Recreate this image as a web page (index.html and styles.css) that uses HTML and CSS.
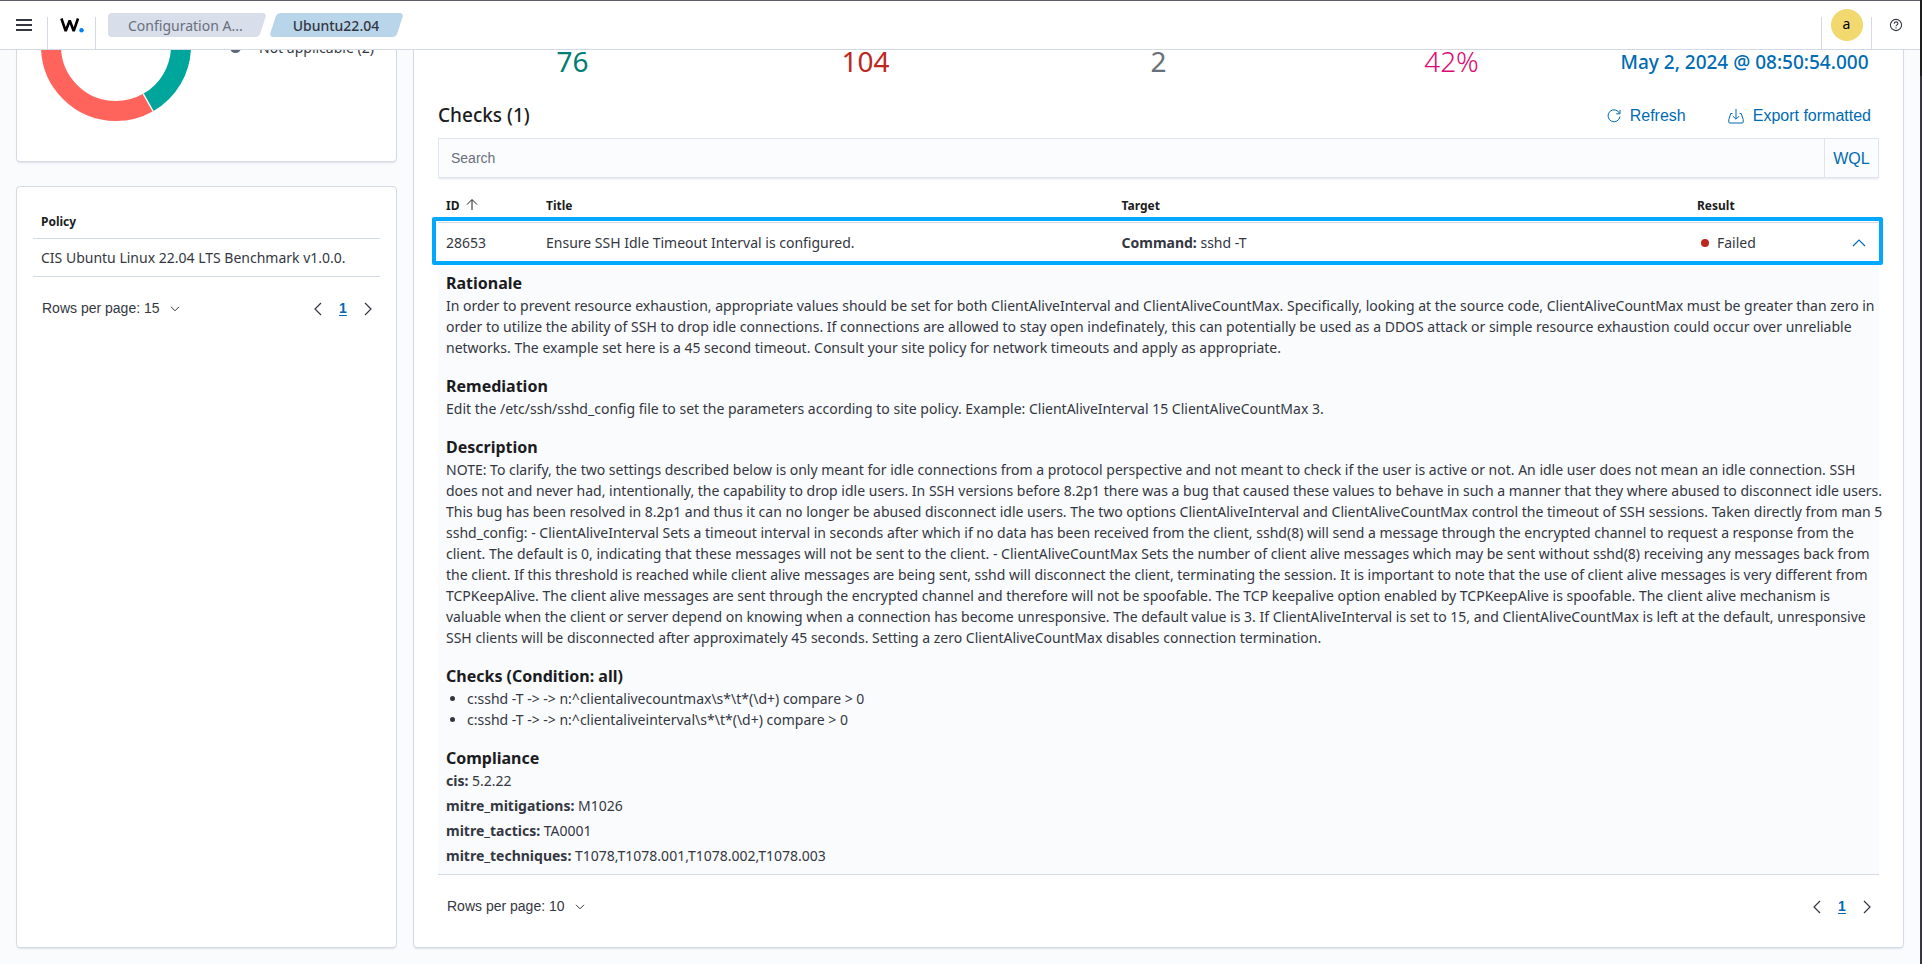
FILE: index.html
```html
<!DOCTYPE html>
<html lang="en">
<head>
<meta charset="utf-8">
<title>Configuration Assessment - Ubuntu22.04</title>
<link rel="stylesheet" href="styles.css">
</head>
<body>
<div class="app">
  <header class="header">
    <button class="header-item menu-button" aria-label="Toggle navigation">
      <svg width="16" height="12" viewBox="0 0 16 12"><path d="M0 1h16M0 6h16M0 11h16" stroke="#343741" stroke-width="2"/></svg>
    </button>
    <a class="header-item brand" href="#" aria-label="Home">
      <svg width="24" height="15" viewBox="0 0 24 15"><path d="M1.400 .5l4.300 12.500 4-10.500 4 10.500L18 .5" fill="none" stroke="#000" stroke-width="2.600" stroke-linejoin="bevel"/><circle cx="21.500" cy="12.300" r="2.200" fill="#0080ff"/></svg>
    </a>
    <nav class="breadcrumbs" aria-label="Breadcrumbs">
      <a class="crumb crumb-first" href="#">Configuration A...</a>
      <a class="crumb crumb-current" href="#" aria-current="page">Ubuntu22.04</a>
    </nav>
    <button class="header-item account" aria-label="Account menu"><span class="avatar">a</span></button>
    <button class="header-item help" aria-label="Help">
      <svg width="14" height="14" viewBox="0 0 14 14" fill="none" stroke="#343741"><circle cx="7" cy="7" r="5.600" stroke-width="1.100"/><path d="M5.200 5.700c0-2.400 3.700-2.400 3.700-.2 0 1.400-1.900 1.300-1.900 2.800M7 9.300v1.200" stroke-width="1.100"/></svg>
    </button>
  </header>

  <main class="viewport">
    <div class="content">
      <aside class="side">
        <section class="panel chart-panel">
          <svg class="donut" width="150" height="150" viewBox="0 0 150 150">
            <g fill="none" stroke-width="20" transform="rotate(-90 75 75)">
              <circle cx="75" cy="75" r="65" stroke="#00a69b" pathLength="182" stroke-dasharray="76 106"/>
              <circle cx="75" cy="75" r="65" stroke="#ff645c" pathLength="182" stroke-dasharray="104 78" stroke-dashoffset="-76"/>
              <circle cx="75" cy="75" r="65" stroke="#5c6773" pathLength="182" stroke-dasharray="2 180" stroke-dashoffset="-180"/>
            </g>
            <path d="M102.300 122.900L112.100 140.200" stroke="#fff" stroke-width="1.300"/>
          </svg>
          <ul class="legend"><li>Not applicable (2)</li></ul>
        </section>
        <section class="panel policy-panel">
          <table class="table">
            <thead><tr><th scope="col">Policy</th></tr></thead>
            <tbody><tr class="policy-row"><td>CIS Ubuntu Linux 22.04 LTS Benchmark v1.0.0.</td></tr></tbody>
          </table>
          <div class="pagination">
            <button class="rows-button">Rows per page: 15
              <svg width="10" height="6" viewBox="0 0 10 6"><path d="M1 .8l4 4 4-4" fill="none" stroke="#343741"/></svg>
            </button>
            <nav class="pages" aria-label="Policy pages">
              <button aria-label="Previous page"><svg width="8" height="14" viewBox="0 0 8 14"><path d="M7 1L1 7l6 6" fill="none" stroke="#343741" stroke-width="1.200"/></svg></button>
              <button class="page-current" aria-current="page">1</button>
              <button aria-label="Next page"><svg width="8" height="14" viewBox="0 0 8 14"><path d="M1 1l6 6-6 6" fill="none" stroke="#343741" stroke-width="1.200"/></svg></button>
            </nav>
          </div>
        </section>
      </aside>

      <section class="panel checks-panel">
        <div class="stats">
          <p class="stat passed">76</p>
          <p class="stat failed">104</p>
          <p class="stat skipped">2</p>
          <p class="stat score">42%</p>
          <p class="stat scan-date">May 2, 2024 @ 08:50:54.000</p>
        </div>
        <div class="toolbar">
          <h1 class="title">Checks (1)</h1>
          <button class="link-button">
            <svg width="14" height="14" viewBox="0 0 14 14" fill="none" stroke="#006bb4"><path d="M12.500 4.300A6 6 0 1 0 13 7.500M13 .8v4H9.200"/></svg>
            Refresh
          </button>
          <button class="link-button">
            <svg width="16" height="16" viewBox="0 0 16 16" fill="none" stroke="#006bb4"><path d="M4.500 5.500H2.800L.8 11.500V14q0 1 1 1h12.400q1 0 1-1v-2.500l-2-6h-1.700M8 1v10M4.800 8L8 11.200 11.200 8"/></svg>
            Export formatted
          </button>
        </div>
        <div class="search">
          <input class="search-input" type="text" placeholder="Search" aria-label="Search">
          <button class="wql">WQL</button>
        </div>
        <table class="table checks">
          <colgroup><col class="col-id"><col><col><col class="col-result"><col class="col-toggle"></colgroup>
          <thead>
            <tr>
              <th scope="col">ID <svg class="sort" width="12" height="11" viewBox="0 0 12 11"><path d="M6 11V1M1 5.500l5-5 5 5" fill="none" stroke="#1a1c21"/></svg></th>
              <th scope="col">Title</th><th scope="col">Target</th><th scope="col">Result</th><td></td>
            </tr>
          </thead>
          <tbody>
            <tr class="check-row">
              <td>28653</td>
              <td>Ensure SSH Idle Timeout Interval is configured.</td>
              <td><strong>Command:</strong> sshd -T</td>
              <td><span class="health">Failed</span></td>
              <td class="toggle-cell"><button class="toggle" aria-label="Collapse" aria-expanded="true"><svg width="14" height="8" viewBox="0 0 14 8"><path d="M1 7l6-6 6 6" fill="none" stroke="#006bb4" stroke-width="1.200"/></svg></button></td>
            </tr>
            <tr>
              <td class="details" colspan="5">
                <section>
                  <h2>Rationale</h2>
                  <p>In order to prevent resource exhaustion, appropriate values should be set for both ClientAliveInterval and ClientAliveCountMax. Specifically, looking at the source code, ClientAliveCountMax must be greater than zero in order to utilize the ability of SSH to drop idle connections. If connections are allowed to stay open indefinately, this can potentially be used as a DDOS attack or simple resource exhaustion could occur over unreliable networks. The example set here is a 45 second timeout. Consult your site policy for network timeouts and apply as appropriate.</p>
                </section>
                <section>
                  <h2>Remediation</h2>
                  <p>Edit the /etc/ssh/sshd_config file to set the parameters according to site policy. Example: ClientAliveInterval 15 ClientAliveCountMax 3.</p>
                </section>
                <section>
                  <h2>Description</h2>
                  <p>NOTE: To clarify, the two settings described below is only meant for idle connections from a protocol perspective and not meant to check if the user is active or not. An idle user does not mean an idle connection. SSH does not and never had, intentionally, the capability to drop idle users. In SSH versions before 8.2p1 there was a bug that caused these values to behave in such a manner that they where abused to disconnect idle users. This bug has been resolved in 8.2p1 and thus it can no longer be abused disconnect idle users. The two options ClientAliveInterval and ClientAliveCountMax control the timeout of SSH sessions. Taken directly from man 5 sshd_config: - ClientAliveInterval Sets a timeout interval in seconds after which if no data has been received from the client, sshd(8) will send a message through the encrypted channel to request a response from the client. The default is 0, indicating that these messages will not be sent to the client. - ClientAliveCountMax Sets the number of client alive messages which may be sent without sshd(8) receiving any messages back from the client. If this threshold is reached while client alive messages are being sent, sshd will disconnect the client, terminating the session. It is important to note that the use of client alive messages is very different from TCPKeepAlive. The client alive messages are sent through the encrypted channel and therefore will not be spoofable. The TCP keepalive option enabled by TCPKeepAlive is spoofable. The client alive mechanism is valuable when the client or server depend on knowing when a connection has become unresponsive. The default value is 3. If ClientAliveInterval is set to 15, and ClientAliveCountMax is left at the default, unresponsive SSH clients will be disconnected after approximately 45 seconds. Setting a zero ClientAliveCountMax disables connection termination.</p>
                </section>
                <section>
                  <h2>Checks (Condition: all)</h2>
                  <ul class="rules">
                    <li>c:sshd -T -&gt; -&gt; n:^clientalivecountmax\s*\t*(\d+) compare &gt; 0</li>
                    <li>c:sshd -T -&gt; -&gt; n:^clientaliveinterval\s*\t*(\d+) compare &gt; 0</li>
                  </ul>
                </section>
                <section>
                  <h2>Compliance</h2>
                  <div class="compliance">
                    <p><strong>cis:</strong> 5.2.22</p>
                    <p><strong>mitre_mitigations:</strong> M1026</p>
                    <p><strong>mitre_tactics:</strong> TA0001</p>
                    <p><strong>mitre_techniques:</strong> T1078,T1078.001,T1078.002,T1078.003</p>
                  </div>
                </section>
              </td>
            </tr>
          </tbody>
        </table>
        <div class="pagination">
          <button class="rows-button">Rows per page: 10
            <svg width="10" height="6" viewBox="0 0 10 6"><path d="M1 .8l4 4 4-4" fill="none" stroke="#343741"/></svg>
          </button>
          <nav class="pages" aria-label="Check pages">
            <button aria-label="Previous page"><svg width="8" height="14" viewBox="0 0 8 14"><path d="M7 1L1 7l6 6" fill="none" stroke="#343741" stroke-width="1.200"/></svg></button>
            <button class="page-current" aria-current="page">1</button>
            <button aria-label="Next page"><svg width="8" height="14" viewBox="0 0 8 14"><path d="M1 1l6 6-6 6" fill="none" stroke="#343741" stroke-width="1.200"/></svg></button>
          </nav>
        </div>
      </section>
    </div>
  </main>
</div>
<div class="window-edge"></div>
</body>
</html>
```

FILE: styles.css
```css
* { box-sizing: border-box; }

body {
  margin: 0;
  height: 100vh;
  display: flex;
  overflow: hidden;
  background: #fafbfd;
  color: #343741;
  font: 14px/21px "Noto Sans", sans-serif;
}

h1, h2, p, ul { margin: 0; padding: 0; }
ul { list-style: none; }
strong { font-weight: 700; }
svg { display: block; flex: none; }

button {
  display: flex;
  align-items: center;
  justify-content: center;
  margin: 0;
  padding: 0;
  border: 0;
  background: none;
  color: inherit;
  font: 14px/21px "Liberation Sans", Arial, sans-serif;
  cursor: pointer;
}

.app {
  flex: 1;
  min-width: 0;
  display: flex;
  flex-direction: column;
  border-top: 1px solid #5f6067;
}

.window-edge {
  width: 2px;
  background: linear-gradient(#1d1e22 76px, #343741 76px);
}

/* Header */

.header {
  flex: none;
  display: flex;
  align-items: flex-end;
  height: 49px;
  border-bottom: 1px solid #d3dae6;
  background: #fff;
}

.header-item {
  display: flex;
  align-items: center;
  justify-content: center;
  width: 48px;
  height: 32px;
  padding-bottom: 16px;
  border-right: 1px solid #d3dae6;
}

.header .help { border-right: 0; }
.header .account { width: 51px; border-left: 1px solid #d3dae6; }

.avatar {
  flex: none;
  width: 32px;
  height: 32px;
  border-radius: 50%;
  background: #f1d86f;
  color: #000;
  font: 400 14px/30px "Noto Sans", sans-serif;
  text-align: center;
}

.breadcrumbs {
  flex: 1;
  display: flex;
  gap: 10px;
  padding: 0 12px 12px;
}

.crumb {
  position: relative;
  isolation: isolate;
  padding: 2px 20px 1px;
  color: #69707d;
  text-decoration: none;
}

.crumb::before,
.crumb-first::after {
  content: "";
  position: absolute;
  z-index: -1;
  inset: 0;
  border-radius: 4px;
  background: #d8deea;
  transform: skewX(-18deg);
}

.crumb-first::before { right: 50%; transform: none; }
.crumb-first::after { left: 4px; }

.crumb-current { color: #343741; font-weight: 500; }
.crumb-current::before { background: #b8d5ea; }

/* Page */

.viewport { flex: 1; min-height: 0; overflow: hidden; }

.content {
  display: grid;
  grid-template-columns: minmax(0, 381fr) minmax(0, 1491fr);
  gap: 16px;
  height: calc(100% + 96px);
  margin-top: -112px;
  padding: 0 16px;
}

.side {
  display: flex;
  flex-direction: column;
  gap: 24px;
}

.panel {
  border: 1px solid #d3dae6;
  border-radius: 4px;
  background: #fff;
  box-shadow: 0 2px 2px -1px rgba(152, 162, 179, 0.3);
}

.chart-panel {
  display: flex;
  align-items: flex-end;
  gap: 39px;
  padding: 32px 24px 40px;
}

.legend { flex: 1; padding-bottom: 63px; }
.legend li { display: flex; align-items: center; gap: 18px; white-space: nowrap; }
.legend li::before {
  content: "";
  width: 11px;
  height: 11px;
  border-radius: 50%;
  background: #5c6773;
}

.policy-panel { flex: 1; padding: 16px; }
.checks-panel { padding: 101px 24px 0; }

/* Tables */

.table { width: 100%; border-collapse: collapse; table-layout: fixed; }
.table th, .table td { padding: 0 8px; text-align: left; }
.table thead th { height: 35px; padding-top: 4px; color: #1a1c21; font-size: 12px; line-height: 18px; font-weight: 700; }
.table tbody td { border-top: 1px solid #d3dae6; border-bottom: 1px solid #d3dae6; }
.policy-row td { height: 38px; }

.pagination {
  display: flex;
  align-items: center;
  justify-content: space-between;
  padding-top: 20px;
}

.rows-button { gap: 10px; padding-left: 9px; }
.pages { display: flex; gap: 1px; }
.pages button { width: 24px; height: 24px; }
.pages .page-current {
  color: #006bb4;
  font-weight: 700;
  text-decoration: underline;
  text-underline-offset: 2px;
}

/* Checks */

.stats { display: grid; grid-template-columns: repeat(5, 1fr); align-items: center; margin: 0 -12px; }
.stat { font-size: 28px; line-height: 40px; font-weight: 400; text-align: center; white-space: nowrap; }
.passed { color: #017d73; }
.failed { color: #bd271e; }
.skipped { color: #69707d; }
.score { color: #dd0a73; font-weight: 300; }
.scan-date { padding-top: 2px; color: #006bb4; font-size: 19px; font-weight: 500; }

.toolbar { display: flex; align-items: center; gap: 42px; height: 40px; margin: 13px 8px 3px 0; }
.title { flex: 1; color: #1a1c21; font-size: 19px; line-height: 32px; font-weight: 500; }
.link-button { gap: 9px; padding-top: 2px; color: #006bb4; font-size: 16px; line-height: 24px; }

.search {
  display: flex;
  height: 40px;
  border: 1px solid #e0e4ee;
  background: #fbfcfd;
  box-shadow: 0 2px 2px -1px rgba(152, 162, 179, 0.3);
}

.search-input {
  flex: 1;
  min-width: 0;
  padding: 0 12px;
  border: 0;
  background: none;
  color: #343741;
  font: 14px/21px "Liberation Sans", Arial, sans-serif;
}

.search-input::placeholder { color: #69707d; opacity: 1; }
.wql { width: 54px; border-left: 1px solid #e0e4ee; color: #006bb4; font-size: 16px; }

.checks { margin-top: 9px; }
.col-id { width: 100px; }
.col-result { width: 142px; }
.col-toggle { width: 48px; }
.sort { display: inline-block; margin-left: 3px; }

.check-row { position: relative; }
.check-row td { height: 41px; }
.toggle-cell::after {
  content: "";
  position: absolute;
  inset: -5px -4px -2px -6px;
  border: 4px solid #00a9ff;
  border-radius: 2px;
  pointer-events: none;
}

.health { display: flex; align-items: center; gap: 8px; padding-left: 4px; }
.health::before { content: ""; width: 8px; height: 8px; border-radius: 50%; background: #bd271e; }
.toggle { width: 24px; height: 24px; margin-left: auto; }

.table td.details { padding: 7px 0 8px 8px; background: #fafbfd; }
.details section { margin-right: -5px; }
.details section + section { margin-top: 16px; }
.details h2 { color: #1a1c21; font-size: 16px; line-height: 24px; font-weight: 700; }
.rules { padding-left: 21px; }
.rules li { list-style: disc; }
.compliance { display: grid; gap: 4px; }
```
